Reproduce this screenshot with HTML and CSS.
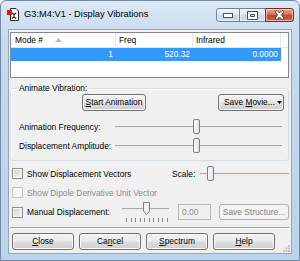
FILE: index.html
```html
<!DOCTYPE html>
<html>

<head>
    <meta charset="UTF-8">
    <meta name="viewport" content="width=device-width, initial-scale=1.0">
    <title>Display Vibrations</title>
    <link rel="stylesheet" href="styles.css">
</head>

<body>
    <div class="window">
        <div class="titlebar">
            <svg class="app-icon" width="13" height="13" viewBox="0 0 13 13">
                <path d="M3.5 0.5h5.5l2.5 2.5v9.5h-8z" fill="#fff" stroke="#2b2b2b"/>
                <path d="M5 5l2 1.5 2-1.5M7 6.5v2.5l-2 1.5M7 9l2 1.5" fill="none" stroke="#222" stroke-width="1.1"/>
                <rect x="0" y="2" width="5" height="5" fill="#e3140e"/>
            </svg>
            <span class="title">G3:M4:V1 - Display Vibrations</span>
            <div class="caption">
                <span class="cap cap-min">
                    <svg width="10" height="5" viewBox="0 0 10 5"><rect x="0.5" y="0.5" width="9" height="4" fill="#fff" stroke="#3e506b"/></svg>
                </span>
                <span class="cap cap-max">
                    <svg width="11" height="9" viewBox="0 0 11 9"><path d="M0.5 0.5h10v8h-10zM3.5 3.5v2h4v-2z" fill="#fff" fill-rule="evenodd" stroke="#3e506b"/></svg>
                </span>
                <span class="cap cap-close">
                    <svg width="11" height="10" viewBox="0 0 11 10"><path d="M1 1.5L3 0.5 5.5 3 8 0.5 10 1.5 7.5 5 10 8.5 8 9.5 5.5 7 3 9.5 1 8.5 3.5 5z" fill="#fff" stroke="#5a1a12" stroke-width="0.8"/></svg>
                </span>
            </div>
        </div>

        <div class="client">
            <div class="list">
                <div class="list-head">
                    <div class="hcell">Mode #
                        <svg class="sort" width="7" height="4" viewBox="0 0 7 4"><path d="M0 4L3.5 0 7 4z" fill="#b3bdc8"/></svg>
                    </div>
                    <div class="hcell">Freq</div>
                    <div class="hcell">Infrared</div>
                    <div class="hcell"></div>
                </div>
                <div class="list-row selected">
                    <div class="cell">1</div>
                    <div class="cell">520.32</div>
                    <div class="cell">0.0000</div>
                </div>
            </div>

            <fieldset class="group">
                <legend>Animate Vibration:</legend>
                <div class="group-buttons">
                    <button class="btn btn-start"><u>S</u>tart Animation</button>
                    <button class="btn btn-movie">
                        <span>Save <u>M</u>ovie...</span>
                        <svg class="caret" width="5" height="3" viewBox="0 0 5 3"><path d="M0 0h5L2.5 3z" fill="#000"/></svg>
                    </button>
                </div>
                <div class="slider-row">
                    <span class="slider-label">Animation Frequency:</span>
                    <div class="track">
                        <span class="groove groove-main"></span>
                        <span class="thumb"></span>
                        <span class="groove groove-rest"></span>
                    </div>
                </div>
                <div class="slider-row">
                    <span class="slider-label">Displacement Amplitude:</span>
                    <div class="track">
                        <span class="groove groove-main"></span>
                        <span class="thumb"></span>
                        <span class="groove groove-rest"></span>
                    </div>
                </div>
            </fieldset>

            <div class="options">
                <div class="opt-row">
                    <span class="check"></span>
                    <span class="opt-label">Show Displacement Vectors</span>
                    <div class="scale">
                        <span class="scale-label">Scale:</span>
                        <div class="track track-scale">
                            <span class="groove groove-scale"></span>
                            <span class="thumb"></span>
                            <span class="groove groove-rest"></span>
                        </div>
                    </div>
                </div>
                <div class="opt-row disabled">
                    <span class="check"></span>
                    <span class="opt-label">Show Dipole Derivative Unit Vector</span>
                </div>
                <div class="opt-row opt-manual">
                    <span class="check"></span>
                    <span class="opt-label manual-label">Manual Displacement:</span>
                    <div class="mini-slider">
                        <div class="track track-mini">
                            <span class="groove groove-mini"></span>
                            <svg class="thumb-down" width="7" height="13" viewBox="0 0 7 13"><path d="M0.5 0.5h6v8.5l-3 3.5-3-3.5z" fill="#f1f1f1" stroke="#7a7f86"/></svg>
                            <span class="groove groove-rest"></span>
                        </div>
                        <div class="ticks">
                            <i></i><i></i><i></i><i></i><i></i><i></i><i></i><i></i><i></i><i></i>
                        </div>
                    </div>
                    <span class="textbox">0.00</span>
                    <button class="btn btn-disabled btn-structure">Save Structure...</button>
                </div>
            </div>

            <div class="separator"></div>

            <div class="bottom">
                <button class="btn btn-bottom"><u>C</u>lose</button>
                <button class="btn btn-bottom">Ca<u>n</u>cel</button>
                <button class="btn btn-bottom"><u>S</u>pectrum</button>
                <button class="btn btn-bottom"><u>H</u>elp</button>
                <svg class="grip" width="7" height="7" viewBox="0 0 7 7">
                    <rect x="5" y="0" width="2" height="2" fill="#c3c7cc"/>
                    <rect x="2.5" y="2.5" width="2" height="2" fill="#c3c7cc"/>
                    <rect x="5" y="2.5" width="2" height="2" fill="#c3c7cc"/>
                    <rect x="0" y="5" width="2" height="2" fill="#c3c7cc"/>
                    <rect x="2.5" y="5" width="2" height="2" fill="#c3c7cc"/>
                    <rect x="5" y="5" width="2" height="2" fill="#c3c7cc"/>
                </svg>
            </div>
        </div>
    </div>
</body>

</html>
```

FILE: styles.css
```css
body {
    margin: 0;
    font-family: "Liberation Sans", Arial, sans-serif;
    font-size: 8.4px;
    color: #000;
}

.window {
    width: 300px;
    height: 261px;
    box-sizing: border-box;
    border: 1px solid #6f8bac;
    border-radius: 6px 6px 0 0;
    background: linear-gradient(#dce8f5, #c6d9ee 40px, #bdd3ea);
    display: flex;
    flex-direction: column;
    overflow: hidden;
}

/* title bar */
.titlebar {
    height: 28px;
    box-sizing: border-box;
    display: flex;
    align-items: flex-start;
    padding: 7px 0 0 6px;
}

.app-icon {
    flex: none;
}

.title {
    margin-left: 4px;
    font-size: 9.3px;
    line-height: 13px;
}

.caption {
    margin-left: auto;
    margin-right: 5px;
    display: flex;
}

.cap {
    height: 14px;
    box-sizing: border-box;
    display: flex;
    align-items: center;
    justify-content: center;
    border: 1px solid #6d819c;
    background: linear-gradient(#eef3fa, #dde7f3 45%, #c7d5e6 50%, #d3dfed);
    box-shadow: inset 0 0 0 1px rgba(255, 255, 255, 0.55);
}

.cap-min {
    width: 24px;
    border-radius: 3px 0 0 3px;
}

.cap-max {
    width: 27px;
    margin-left: -1px;
}

.cap-close {
    width: 29px;
    margin-left: -1px;
    border-color: #6e2c22;
    border-radius: 0 3px 3px 0;
    background: linear-gradient(#e9a899, #d9735f 45%, #c3412b 50%, #d0644a);
}

/* client area */
.client {
    flex: 1;
    margin: 0 7px 6px;
    border: 1px solid #91a7c0;
    background: #f0f0f0;
    display: flex;
    flex-direction: column;
}

.list {
    margin: 2px 2px 0 1px;
    height: 46px;
    box-sizing: border-box;
    border: 1px solid #828790;
    background: #fff;
}

.list-head {
    display: grid;
    grid-template-columns: 105px 77px 88px 1fr;
    height: 15px;
    box-sizing: border-box;
    border-bottom: 1px solid #e5e5e5;
}

.hcell {
    padding-left: 3px;
    line-height: 14px;
    border-right: 1px solid #e3e8ee;
    display: flex;
    align-items: center;
}

.hcell:first-child {
    padding-left: 4px;
}

.hcell:last-child {
    border-right: none;
}

.sort {
    margin-left: 12px;
}

.list-row {
    display: grid;
    grid-template-columns: 105px 77px 88px;
    width: 270px;
    height: 13px;
}

.selected {
    background: #3399ff;
    color: #fff;
}

.cell {
    text-align: right;
    padding-right: 3px;
    line-height: 13px;
}

/* group box */
.group {
    margin: 5px 2px 0 1px;
    padding: 0 0 5px;
    border: 1px solid #d5dfe5;
    border-radius: 3px;
    box-shadow: inset 1px 1px 0 #fff;
}

.group legend {
    margin-left: 6px;
    padding: 0 2px;
    line-height: 10px;
}

.group-buttons {
    display: flex;
    margin-top: 1px;
    padding: 0 4px 0 71px;
}

.btn {
    font: inherit;
    color: #000;
    height: 17px;
    box-sizing: border-box;
    border: 1px solid #707070;
    border-radius: 3px;
    background: linear-gradient(#f3f3f3, #ebebeb 48%, #dddddd 52%, #cfcfcf);
    box-shadow: inset 0 0 0 1px #fbfbfb;
    padding: 0;
    line-height: 15px;
}

.btn-start {
    width: 64px;
}

.btn-movie {
    width: 66px;
    margin-left: auto;
    display: flex;
    align-items: center;
    padding-left: 5px;
}

.caret {
    margin-left: auto;
    margin-right: 1px;
}

.slider-row {
    display: flex;
    align-items: center;
    height: 19px;
    padding: 0 6px 0 8px;
}

.group-buttons + .slider-row {
    margin-top: 6px;
}

.slider-label {
    width: 96px;
    flex: none;
}

.track {
    flex: 1;
    display: flex;
    align-items: center;
}

.groove {
    height: 0;
    border-top: 1px solid #a9abae;
    border-bottom: 1px solid #e9e9e9;
}

.groove-main {
    width: 78px;
}

.groove-scale {
    width: 7px;
}

.groove-mini {
    width: 21px;
}

.groove-rest {
    flex: 1;
}

.thumb {
    width: 7px;
    height: 15px;
    box-sizing: border-box;
    border: 1px solid #797e85;
    border-radius: 2px;
    background: linear-gradient(to right, #fbfbfb, #e4e4e4);
    flex: none;
}

/* check options */
.options {
    padding: 3px 2px 0 3px;
}

.opt-row {
    display: flex;
    align-items: center;
    height: 19px;
}

.opt-manual {
    height: 20px;
}

.check {
    width: 11px;
    height: 11px;
    box-sizing: border-box;
    border: 1px solid #8f8f8f;
    background: linear-gradient(135deg, #d2d2d2, #f6f6f6);
    box-shadow: inset 0 0 0 1px #f4f4f4;
    flex: none;
}

.opt-label {
    margin-left: 4px;
}

.disabled {
    color: #8d8d8d;
}

.disabled .check {
    border-color: #c6c6c6;
    background: #f7f7f7;
}

.scale {
    margin-left: auto;
    display: flex;
    align-items: center;
}

.scale-label {
    width: 28px;
}

.track-scale {
    width: 89px;
    flex: none;
}

.manual-label {
    width: 95px;
    flex: none;
}

.mini-slider {
    width: 47px;
    display: flex;
    flex-direction: column;
}

.track-mini {
    height: 13px;
}

.thumb-down {
    flex: none;
}

.ticks {
    display: flex;
    justify-content: space-between;
    margin: 3px 1px 0 4px;
    height: 4px;
}

.ticks i {
    width: 1px;
    background: #8a8a8a;
}

.textbox {
    margin-left: 9px;
    width: 33px;
    height: 16px;
    box-sizing: border-box;
    border: 1px solid #b4b7bb;
    color: #8d8d8d;
    padding-left: 3px;
    line-height: 14px;
}

.btn-disabled {
    border-color: #adb2b5;
    background: #f4f4f4;
    box-shadow: none;
    color: #838383;
}

.btn-structure {
    margin-left: 8px;
    width: 70px;
    height: 16px;
    line-height: 14px;
}

.separator {
    margin: 5px 2px 0 1px;
    border-top: 1px solid #a0a0a0;
    border-bottom: 1px solid #fff;
}

.bottom {
    flex: 1;
    display: flex;
    gap: 5px;
    padding: 4px 1px 1px 3px;
}

.btn-bottom {
    width: 62px;
}

.grip {
    margin-left: auto;
    align-self: flex-end;
}
```
